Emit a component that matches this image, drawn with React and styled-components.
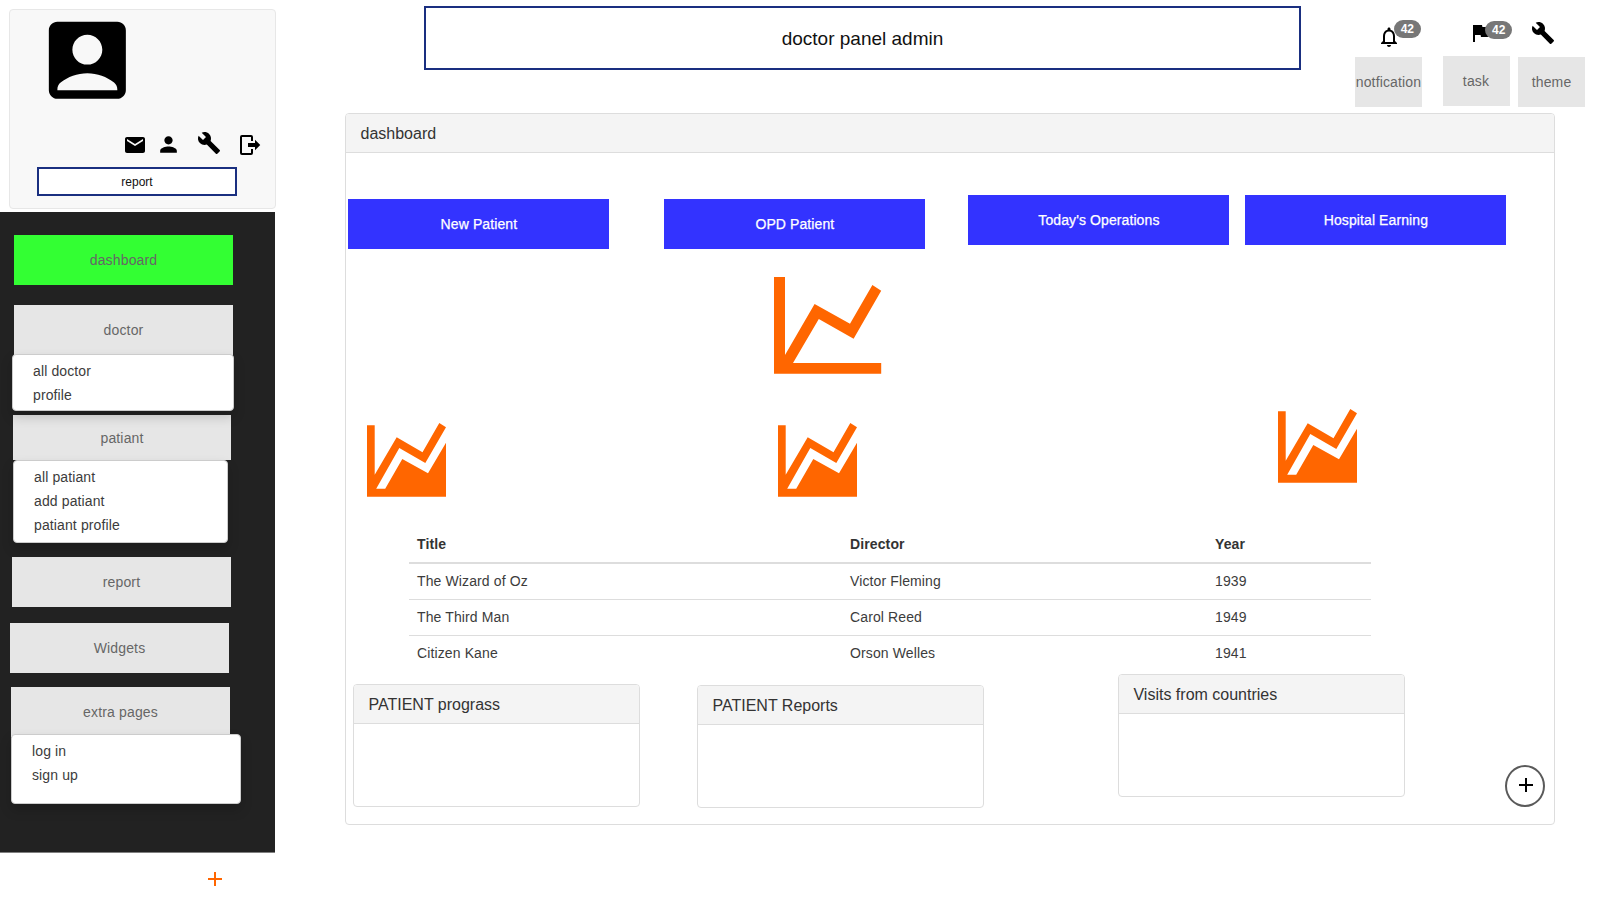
import React from "react";
import styled, { createGlobalStyle } from "styled-components";
import {
  MdAccountBox,
  MdEmail,
  MdPerson,
  MdBuild,
  MdAdd,
  MdNotificationsNone,
  MdFlag,
} from "react-icons/md";

const GlobalStyle = createGlobalStyle`
  *, *::before, *::after { box-sizing: border-box; }
  body {
    margin: 0;
    background: #fff;
    color: #333;
    font-family: "Liberation Sans", Arial, Helvetica, sans-serif;
    font-size: 14px;
    line-height: 20px;
  }
  svg { display: block; flex: none; }
`;

const Page = styled.div`
  display: flex;
  width: 1600px;
  height: 900px;
  overflow: hidden;
`;

/* ---------- sidebar ---------- */

const Sidebar = styled.aside`
  display: flex;
  flex-direction: column;
  flex: none;
  width: 276px;
`;

const ProfileCard = styled.section`
  display: flex;
  flex-direction: column;
  width: 267px;
  height: 200px;
  margin: 8.5px 0 3.5px 8.5px;
  border: 1px solid #e7e7e7;
  border-radius: 4px;
  background: #f8f8f8;
  color: #000;
`;

const Avatar = styled(MdAccountBox)`
  width: 102.7px;
  height: 102.7px;
  margin: -0.6px 0 0 26.5px;
`;

const ProfileActions = styled.div`
  display: flex;
  align-items: flex-start;
  height: 26px;
  margin: 19.9px 0 0 113.5px;
`;

const ActionIcon = styled.span`
  display: flex;
  margin: ${(p) => p.$top || 0}px 0 0 ${(p) => p.$gap || 0}px;
`;

const OutlineBox = styled.div`
  display: flex;
  align-items: center;
  justify-content: center;
  flex: none;
  padding-top: 1px;
  border: 2px solid #1a2f80;
  background: #fff;
  color: #111;
`;

const ReportBox = styled(OutlineBox)`
  width: 200px;
  height: 29px;
  margin: 9.5px 0 0 27.5px;
  font-size: 12px;
`;

const Nav = styled.nav`
  display: flex;
  flex-direction: column;
  width: 275px;
  height: 641px;
  padding-top: 23px;
  border-bottom: 1px solid #808080;
  background: #222;
`;

const NavButton = styled.a`
  display: flex;
  align-items: center;
  justify-content: center;
  flex: none;
  width: ${(p) => p.$w || 219}px;
  height: ${(p) => p.$h || 50}px;
  margin: ${(p) => p.$top || 0}px 0 0 ${(p) => p.$left}px;
  background: ${(p) => (p.$active ? "#33ff33" : "#e6e6e6")};
  color: #666;
  letter-spacing: 0.15px;
`;

const NavMenu = styled.ul`
  position: relative;
  z-index: 1;
  flex: none;
  width: ${(p) => p.$w}px;
  height: ${(p) => p.$h}px;
  margin: ${(p) => p.$top || 0}px 0 0 ${(p) => p.$left}px;
  padding: 4px 0 0 20px;
  list-style: none;
  border: 1px solid #ccc;
  border-radius: 4px;
  background: #fff;
  color: #3c3c3c;
  box-shadow: 0 6px 12px rgba(0, 0, 0, 0.175);
  letter-spacing: 0.12px;
  line-height: 24px;
`;

const AddEntry = styled.button`
  display: flex;
  margin: 14px 0 0 203px;
  padding: 0;
  width: 24px;
  border: 0;
  background: none;
  color: #ff6600;
`;

/* ---------- header ---------- */

const Main = styled.main`
  display: flex;
  flex-direction: column;
  flex: 1;
`;

const Header = styled.header`
  display: flex;
  align-items: flex-start;
  height: 113px;
`;

const TitleBox = styled(OutlineBox)`
  width: 877px;
  height: 64px;
  margin: 6px 0 0 148px;
  padding-top: 2px;
  font-size: 19px;
`;

const Tool = styled.div`
  display: flex;
  flex-direction: column;
  flex: none;
  width: 67px;
  margin-left: ${(p) => p.$gap}px;
`;

const ToolIcon = styled.div`
  display: flex;
  align-items: flex-start;
  height: ${(p) => p.$h}px;
  padding: ${(p) => p.$top}px 0 0 ${(p) => p.$left}px;
  color: #000;
`;

const Badge = styled.span`
  height: 18px;
  width: 27.4px;
  margin: ${(p) => p.$shift}px 0 0 ${(p) => p.$pull}px;
  flex: none;
  z-index: 1;
  border-radius: 10px;
  background: #777;
  color: #fff;
  font-size: 12px;
  font-weight: 700;
  line-height: 18px;
  text-align: center;
`;

const ToolButton = styled.a`
  display: flex;
  align-items: center;
  justify-content: center;
  height: 50px;
  background: #e6e6e6;
  color: #666;
  letter-spacing: 0.15px;
`;

/* ---------- dashboard ---------- */

const Panel = styled.section`
  display: flex;
  flex-direction: column;
  flex: none;
  border: 1px solid #ddd;
  border-radius: 4px;
  background: #fff;
`;

const PanelHeading = styled.h2`
  display: flex;
  align-items: center;
  flex: none;
  height: 39px;
  margin: 0;
  padding: 2px 14.5px 0;
  border-bottom: 1px solid #ddd;
  border-radius: 3px 3px 0 0;
  background: #f4f4f4;
  font-size: 16px;
  font-weight: 400;
`;

const DashboardPanel = styled(Panel)`
  width: 1210px;
  height: 712px;
  margin-left: 69px;
`;

const StatRow = styled.div`
  display: flex;
  align-items: flex-start;
  height: 55px;
  margin: 42px 0 0 2.4px;
`;

const StatButton = styled.a`
  display: flex;
  align-items: center;
  justify-content: center;
  width: 261px;
  height: 50px;
  margin: ${(p) => p.$top || 0}px 0 0 ${(p) => p.$gap || 0}px;
  background: #3333ff;
  color: #fff;
  letter-spacing: 0.1px;
  -webkit-text-stroke: 0.25px #fff;
`;

const LineChartRow = styled.div`
  display: flex;
  height: 132px;
  padding: 27px 0 0 428px;
  color: #ff6600;
`;

const AreaChartRow = styled.div`
  display: flex;
  align-items: flex-start;
  height: 144px;
  padding-left: 21px;
  color: #ff6600;
`;

const ChartSlot = styled.div`
  margin: ${(p) => p.$top || 0}px 0 0 ${(p) => p.$gap || 0}px;
`;

const MovieTable = styled.table`
  width: 962px;
  margin-left: 63px;
  border-spacing: 0;
  table-layout: fixed;
  letter-spacing: 0.12px;
  th, td { line-height: 20px; text-align: left; }
  th { padding: 8px; border-bottom: 2px solid #ddd; }
  td { padding: 7px 8px 8px; color: #3c3c3c; }
  tr + tr td { border-top: 1px solid #ddd; }
`;

const CardRow = styled.div`
  display: flex;
  align-items: flex-start;
  margin: 3px 0 0 7px;
`;

const InfoCard = styled(Panel)`
  width: 287.4px;
  height: 123px;
  margin: ${(p) => p.$top || 0}px 0 0 ${(p) => p.$gap || 0}px;
`;

const RoundButton = styled.button`
  display: flex;
  justify-content: center;
  width: 40px;
  height: 42px;
  margin: 91px 0 0 99.6px;
  padding: 6px 0 0 2px;
  border: 2px solid #5a5a5a;
  border-radius: 50%;
  background: #fff;
  color: #000;
`;

const LogoutIcon = () => (
  <svg width="24" height="24" viewBox="0 0 24 24" fill="currentColor">
    <path d="M17,17.25V14H10V10H17V6.75L22.25,12L17,17.25M13,2A2,2 0 0,1 15,4V8H13V4H4V20H13V16H15V20A2,2 0 0,1 13,22H4A2,2 0 0,1 2,20V4A2,2 0 0,1 4,2H13Z" />
  </svg>
);

const LineChartIcon = () => (
  <svg width="108" height="97" viewBox="0 0 108 97" fill="currentColor">
    <path d="M0 0H11V78L40.6 27L76 46.7L98.4 8L107.2 13.7L79.6 61.7L44.8 42L19 86H107.2V96.7H0Z" />
  </svg>
);

const AreaChartIcon = () => (
  <svg width="79" height="74" viewBox="0 0 79 74" fill="currentColor">
    <path d="M0 2.3H7.7V51.7L29.7 14.3L55.5 29.3L72.3 0L79 4.3L58.3 40L32.3 25L9.2 65.7H18.2L35.3 36L61 50.3L79 19.7V73.7H0Z" />
  </svg>
);

const movies = [
  ["The Wizard of Oz", "Victor Fleming", "1939"],
  ["The Third Man", "Carol Reed", "1949"],
  ["Citizen Kane", "Orson Welles", "1941"],
];

export default function App() {
  return (
    <Page>
      <GlobalStyle />
      <Sidebar>
        <ProfileCard>
          <Avatar />
          <ProfileActions>
            <ActionIcon $top={2}><MdEmail size={24} /></ActionIcon>
            <ActionIcon $gap={9} $top={1}><MdPerson size={25} /></ActionIcon>
            <ActionIcon $gap={16}><MdBuild size={24} /></ActionIcon>
            <ActionIcon $gap={17} $top={2}><LogoutIcon /></ActionIcon>
          </ProfileActions>
          <ReportBox>report</ReportBox>
        </ProfileCard>
        <Nav>
          <NavButton $left={14} $active>dashboard</NavButton>
          <NavButton $left={14} $top={20}>doctor</NavButton>
          <NavMenu $left={12} $top={-1} $w={222.4} $h={57}>
            <li>all doctor</li>
            <li>profile</li>
          </NavMenu>
          <NavButton $left={13} $top={4} $w={218} $h={45}>patiant</NavButton>
          <NavMenu $left={13} $w={215} $h={83.4}>
            <li>all patiant</li>
            <li>add patiant</li>
            <li>patiant profile</li>
          </NavMenu>
          <NavButton $left={12} $top={13.6}>report</NavButton>
          <NavButton $left={10} $top={16}>Widgets</NavButton>
          <NavButton $left={11} $top={14}>extra pages</NavButton>
          <NavMenu $left={11} $top={-3} $w={230} $h={70}>
            <li>log in</li>
            <li>sign up</li>
          </NavMenu>
        </Nav>
        <AddEntry><MdAdd size={24} /></AddEntry>
      </Sidebar>

      <Main>
        <Header>
          <TitleBox>doctor panel admin</TitleBox>
          <Tool $gap={54}>
            <ToolIcon $top={25} $left={22} $h={57}>
              <MdNotificationsNone size={24} />
              <Badge $shift={-5} $pull={-7.4}>42</Badge>
            </ToolIcon>
            <ToolButton>notfication</ToolButton>
          </Tool>
          <Tool $gap={20.5}>
            <ToolIcon $top={21} $left={25.5} $h={55.6}>
              <MdFlag size={24} />
              <Badge $shift={0} $pull={-7}>42</Badge>
            </ToolIcon>
            <ToolButton>task</ToolButton>
          </Tool>
          <Tool $gap={8.5}>
            <ToolIcon $top={21} $left={13} $h={57}>
              <MdBuild size={24} />
            </ToolIcon>
            <ToolButton>theme</ToolButton>
          </Tool>
        </Header>

        <DashboardPanel>
          <PanelHeading>dashboard</PanelHeading>
          <StatRow>
            <StatButton $top={4}>New Patient</StatButton>
            <StatButton $top={4} $gap={55}>OPD Patient</StatButton>
            <StatButton $gap={43}>Today's Operations</StatButton>
            <StatButton $gap={16}>Hospital Earning</StatButton>
          </StatRow>
          <LineChartRow><LineChartIcon /></LineChartRow>
          <AreaChartRow>
            <ChartSlot $top={41}><AreaChartIcon /></ChartSlot>
            <ChartSlot $gap={332} $top={41}><AreaChartIcon /></ChartSlot>
            <ChartSlot $gap={421} $top={27}><AreaChartIcon /></ChartSlot>
          </AreaChartRow>
          <MovieTable>
            <colgroup>
              <col width="433" />
              <col width="365" />
              <col width="164" />
            </colgroup>
            <thead>
              <tr><th>Title</th><th>Director</th><th>Year</th></tr>
            </thead>
            <tbody>
              {movies.map((row) => (
                <tr key={row[0]}>
                  {row.map((cell) => <td key={cell}>{cell}</td>)}
                </tr>
              ))}
            </tbody>
          </MovieTable>
          <CardRow>
            <InfoCard $top={10}><PanelHeading>PATIENT prograss</PanelHeading></InfoCard>
            <InfoCard $top={11} $gap={56.6}><PanelHeading>PATIENT Reports</PanelHeading></InfoCard>
            <InfoCard $gap={133.6}><PanelHeading>Visits from countries</PanelHeading></InfoCard>
            <RoundButton><MdAdd size={24} /></RoundButton>
          </CardRow>
        </DashboardPanel>
      </Main>
    </Page>
  );
}
